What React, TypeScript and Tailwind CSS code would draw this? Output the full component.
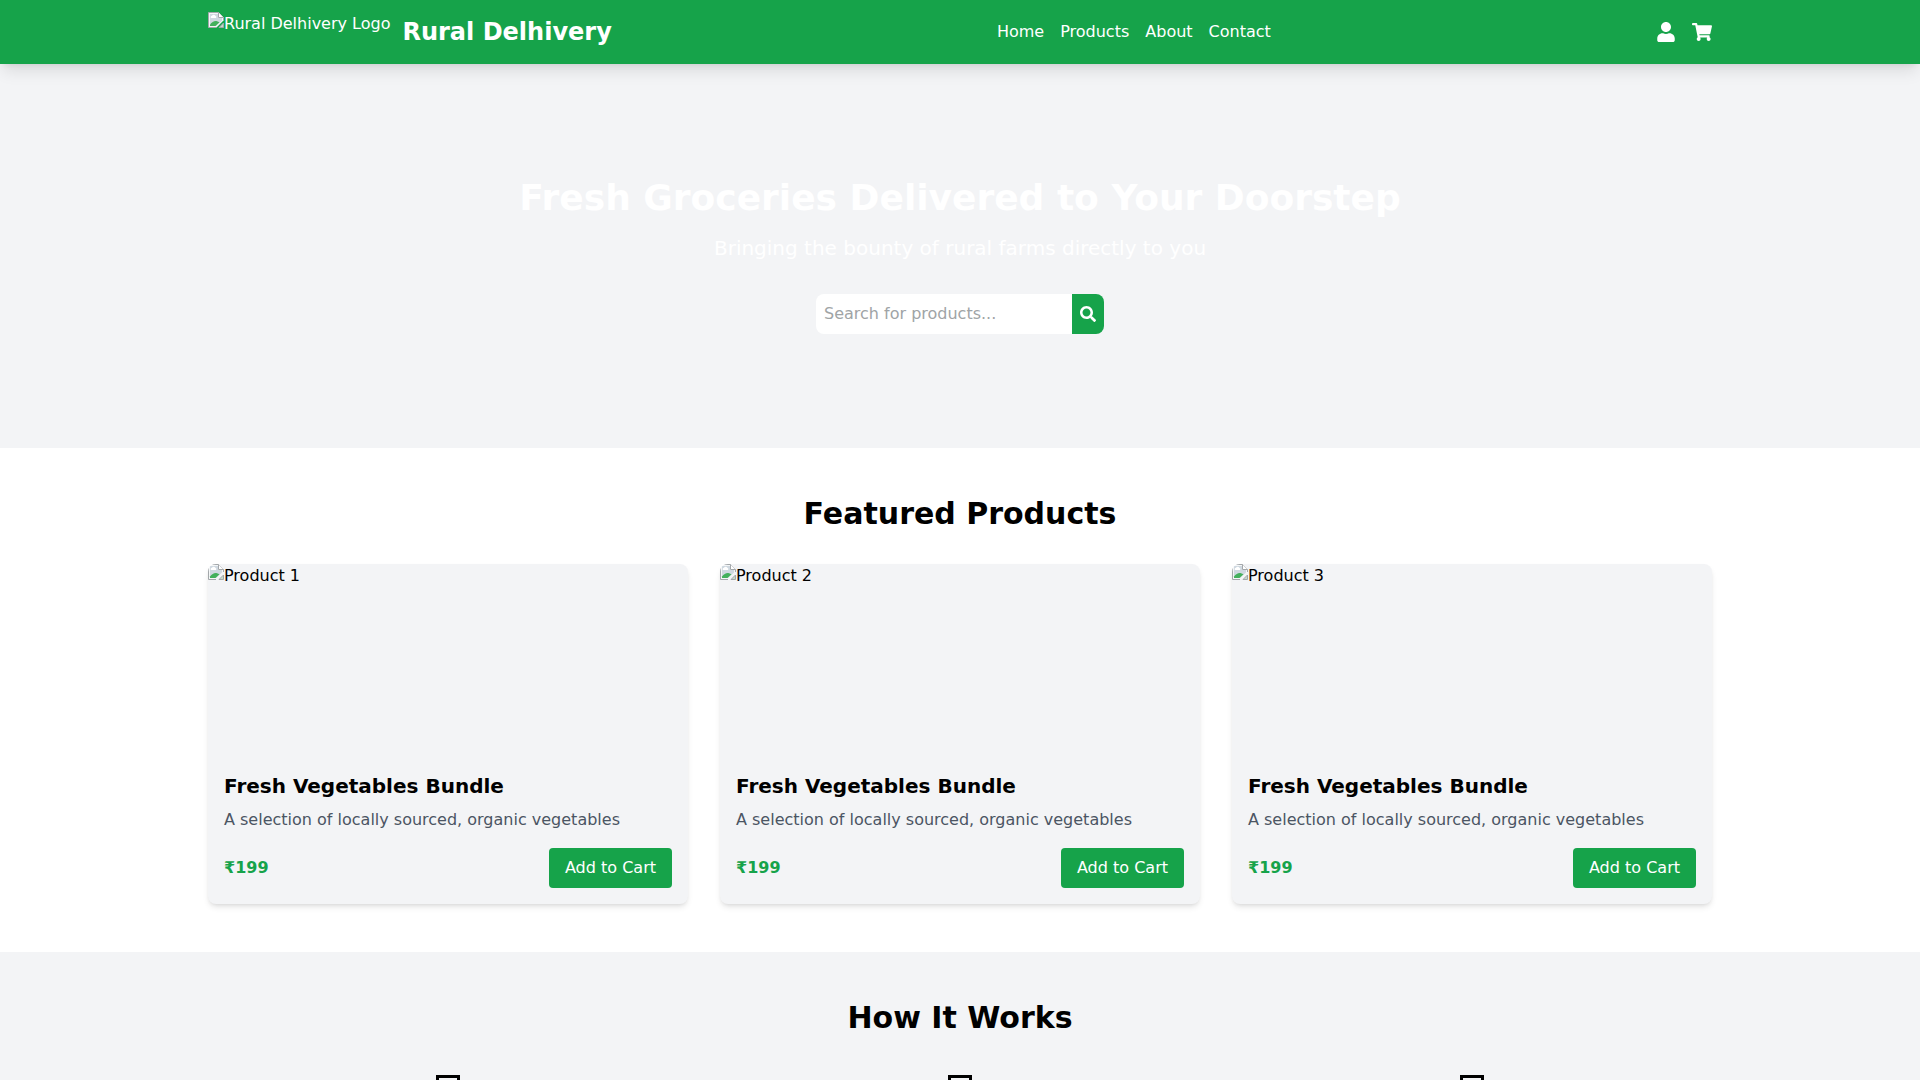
import { useState } from 'react';
import { FaSearch, FaShoppingCart, FaUser } from 'react-icons/fa';

const navLinks = ['Home', 'Products', 'About', 'Contact'];

const products = [
  { id: 1, image: 'Product 1', name: 'Fresh Vegetables Bundle', price: 199 },
  { id: 2, image: 'Product 2', name: 'Fresh Vegetables Bundle', price: 199 },
  { id: 3, image: 'Product 3', name: 'Fresh Vegetables Bundle', price: 199 },
];

const steps = [1, 2, 3];

const ImageIcon = () => (
  <svg className="w-4 h-4 shrink-0" viewBox="0 0 16 16" aria-hidden="true">
    <path d="M0.5 0.5H10.5L15.5 5.5V8.5L8.5 15.5H0.5Z" fill="#f4f6f7" />
    <path d="M2 2H10V6H14V8.5L8 14H2Z" fill="#cfd8e0" />
    <path d="M3 6a1.4 1.4 0 0 1 1-2.3a2 2 0 0 1 3.6 0.4A1.2 1.2 0 0 1 8 6Z" fill="#fff" />
    <path d="M2 14V12.5C4 10 6.5 8.6 9 9.3L11.5 10.3L7.5 14Z" fill="#43b05c" />
    <path d="M0.5 15.5V0.5H10.5L15.5 5.5V8" fill="none" stroke="#a3a7aa" />
    <path d="M10.5 0.5V5.5H15.5" fill="#fff" stroke="#a3a7aa" />
    <path d="M0.5 15.5H8" stroke="#a3a7aa" />
    <path d="M11 15.5L15.5 11V15.5Z" fill="#c4dccb" stroke="#a3a7aa" />
  </svg>
);

const StepIcon = () => (
  <svg className="w-6 h-8 mx-auto" viewBox="0 0 24 32" aria-hidden="true">
    <rect x="1.5" y="1.5" width="21" height="29" fill="none" stroke="#000" strokeWidth="3" />
  </svg>
);

const Header = () => (
  <header className="relative bg-[#16a34a] text-white shadow-lg">
    <div className="max-w-screen-2xl mx-auto px-4 py-3 flex items-center justify-between">
      <div className="flex items-center">
        <div className="h-10 mr-3 flex items-start" role="img" aria-label="Rural Delhivery Logo">
          <ImageIcon />
          <span>Rural Delhivery Logo</span>
        </div>
        <h1 className="text-2xl font-bold">Rural Delhivery</h1>
      </div>
      <nav className="flex space-x-4">
        {navLinks.map(link => (
          <a key={link} href="#" className="hover:text-green-200">
            {link}
          </a>
        ))}
      </nav>
      <div className="flex items-center space-x-4 text-xl">
        <button aria-label="Account">
          <FaUser />
        </button>
        <button aria-label="Cart">
          <FaShoppingCart />
        </button>
      </div>
    </div>
  </header>
);

const Hero = () => {
  const [query, setQuery] = useState('');

  return (
    <section className="h-96 flex flex-col items-center justify-center text-center text-white">
      <h2 className="text-4xl font-bold mb-4">Fresh Groceries Delivered to Your Doorstep</h2>
      <p className="text-xl mb-8">Bringing the bounty of rural farms directly to you</p>
      <form className="flex" onSubmit={e => e.preventDefault()}>
        <input
          type="text"
          aria-label="Search for products"
          placeholder="Search for products..."
          value={query}
          onChange={e => setQuery(e.target.value)}
          className="w-64 p-2 bg-white text-black placeholder:text-[#a0a4a6] rounded-l-lg outline-none"
        />
        <button type="submit" aria-label="Search" className="bg-[#16a34a] p-2 rounded-r-lg">
          <FaSearch />
        </button>
      </form>
    </section>
  );
};

const FeaturedProducts = () => (
  <section className="bg-white py-12">
    <div className="max-w-screen-2xl mx-auto px-4">
      <h2 className="text-3xl font-bold text-center mb-8">Featured Products</h2>
      <div className="grid grid-cols-1 md:grid-cols-3 gap-8">
        {products.map(product => (
          <div key={product.id} className="bg-[#f3f4f6] rounded-lg shadow-md overflow-hidden">
            <div className="h-48 flex items-start" role="img" aria-label={product.image}>
              <ImageIcon />
              <span>{product.image}</span>
            </div>
            <div className="p-4">
              <h3 className="text-xl font-semibold mb-2">{product.name}</h3>
              <p className="text-[#4b5563] mb-4">A selection of locally sourced, organic vegetables</p>
              <div className="flex items-center justify-between">
                <span className="text-[#16a34a] font-bold">₹{product.price}</span>
                <button className="bg-[#16a34a] hover:bg-green-700 text-white px-4 py-2 rounded">
                  Add to Cart
                </button>
              </div>
            </div>
          </div>
        ))}
      </div>
    </div>
  </section>
);

const HowItWorks = () => (
  <section className="py-12">
    <div className="max-w-screen-2xl mx-auto px-4">
      <h2 className="text-3xl font-bold text-center mb-8">How It Works</h2>
      <div className="grid grid-cols-1 md:grid-cols-3 gap-8">
        {steps.map(step => (
          <div key={step} className="pt-[7px]">
            <StepIcon />
          </div>
        ))}
      </div>
    </div>
  </section>
);

export default function App() {
  return (
    <div className="min-h-screen bg-[#f3f4f6] text-black font-['DejaVu_Sans',sans-serif]">
      <Header />
      <Hero />
      <FeaturedProducts />
      <HowItWorks />
    </div>
  );
}
